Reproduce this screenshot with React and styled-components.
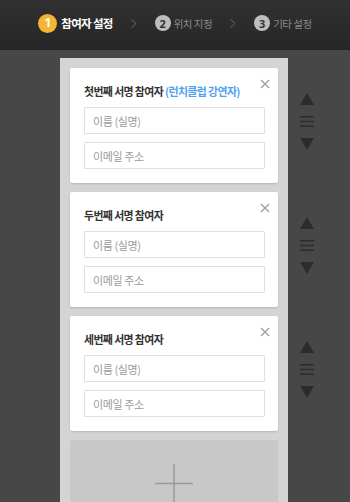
import React from "react";
import styled, { createGlobalStyle } from "styled-components";

const Global = createGlobalStyle`
  html, body { margin: 0; padding: 0; background: #474747; }
  body { font-family: "Noto Sans CJK KR", "Noto Sans", sans-serif; overflow: hidden; }
  * { box-sizing: border-box; }
`;

const Page = styled.div`
  width: 350px;
  height: 502px;
  background: #474747;
  overflow: hidden;
`;

const Header = styled.header`
  height: 50px;
  background: linear-gradient(#313131, #262626);
  display: flex;
  align-items: center;
  justify-content: center;
  padding-bottom: 4px;
  gap: 18px;
`;

const Step = styled.div`
  display: flex;
  align-items: center;
  gap: ${p => (p.$active ? "4px" : "3px")};
`;

const Num = styled.span`
  width: ${p => (p.$active ? "19px" : "16px")};
  height: ${p => (p.$active ? "19px" : "16px")};
  border-radius: 50%;
  background: ${p => (p.$active ? "#f4b533" : "#bdbdbd")};
  color: ${p => (p.$active ? "#fff" : "#333")};
  font-family: "Noto Sans", sans-serif;
  font-weight: 700;
  font-size: ${p => (p.$active ? "12px" : "11px")};
  display: flex;
  align-items: center;
  justify-content: center;
  line-height: 1;
`;

const StepLabel = styled.span`
  color: ${p => (p.$active ? "#fff" : "#8a8a8a")};
  font-weight: ${p => (p.$active ? 700 : 400)};
  font-size: ${p => (p.$active ? "11.5px" : "10.5px")};
  letter-spacing: ${p => (p.$active ? "-0.7px" : "-0.5px")};
  white-space: nowrap;
`;

const Chevron = styled.svg`
  width: 6px;
  height: 9px;
  display: block;
`;

const Body = styled.div`
  display: flex;
  padding: 8px 0 0 60px;
`;

const Panel = styled.div`
  width: 228px;
  background: #d4d4d4;
  padding: 10px;
  display: flex;
  flex-direction: column;
  gap: 9px;
  min-height: 460px;
`;

const Card = styled.div`
  position: relative;
  background: #fff;
  border-radius: 2px;
  box-shadow: 0 1px 2px rgba(0, 0, 0, 0.15);
  padding: 13px 13px 14px 14px;
  display: flex;
  flex-direction: column;
  gap: 8px;
`;

const Title = styled.div`
  height: 20px;
  line-height: 20px;
  margin-bottom: -2px;
  font-size: 10.9px;
  font-weight: 700;
  color: #333;
  letter-spacing: -0.6px;
  white-space: nowrap;
`;

const Accent = styled.span`
  color: #4ea2ef;
`;

const Close = styled.button`
  position: absolute;
  top: 8px;
  right: 5px;
  width: 16px;
  height: 16px;
  padding: 0;
  border: 0;
  background: none;
  display: flex;
  align-items: center;
  justify-content: center;
`;

const Input = styled.input`
  height: 27px;
  width: 100%;
  border: 1px solid #e0e0e0;
  border-radius: 1px;
  padding: 0 8px;
  font-family: "Noto Sans CJK KR", "Noto Sans", sans-serif;
  font-size: 11px;
  letter-spacing: -0.4px;
  outline: none;
  color: #333;
  &::placeholder { color: #9a9a9a; }
`;

const AddBox = styled.div`
  height: 100px;
  background: #c8c8c8;
  border-radius: 3px;
  display: flex;
  justify-content: center;
  padding-top: 24px;
`;

const Controls = styled.div`
  width: 38px;
  padding-top: 10px;
  display: flex;
  flex-direction: column;
  gap: 9px;
`;

const Group = styled.div`
  height: 115px;
  display: flex;
  flex-direction: column;
  align-items: center;
  justify-content: center;
  gap: 11px;
  padding-bottom: 9px;
`;

const Icon = styled.svg`
  display: block;
`;

const Up = () => (
  <Icon width="14" height="12" viewBox="0 0 14 12">
    <path d="M7 0 L14 12 L0 12 Z" fill="#2c2c2c" />
  </Icon>
);
const Down = () => (
  <Icon width="14" height="12" viewBox="0 0 14 12">
    <path d="M0 0 L14 0 L7 12 Z" fill="#2c2c2c" />
  </Icon>
);
const Bars = () => (
  <Icon width="14" height="11" viewBox="0 0 14 11">
    <rect x="0" y="0" width="14" height="1.5" fill="#2c2c2c" />
    <rect x="0" y="4.75" width="14" height="1.5" fill="#2c2c2c" />
    <rect x="0" y="9.5" width="14" height="1.5" fill="#2c2c2c" />
  </Icon>
);

const cards = [
  { title: "첫번째 서명 참여자", accent: "(런치클럽 강연자)" },
  { title: "두번째 서명 참여자" },
  { title: "세번째 서명 참여자" },
];

const steps = [
  { n: 1, label: "참여자 설정", active: true },
  { n: 2, label: "위치 지정" },
  { n: 3, label: "기타 설정" },
];

export default function App() {
  return (
    <Page>
      <Global />
      <Header>
        {steps.map((s, i) => (
          <React.Fragment key={s.n}>
            {i > 0 && (
              <Chevron viewBox="0 0 6 9">
                <path d="M0.5 0.5 L5 4.5 L0.5 8.5" stroke="#6a6a6a" strokeWidth="1" fill="none" />
              </Chevron>
            )}
            <Step $active={s.active}>
              <Num $active={s.active}>{s.n}</Num>
              <StepLabel $active={s.active}>{s.label}</StepLabel>
            </Step>
          </React.Fragment>
        ))}
      </Header>
      <Body>
        <Panel>
          {cards.map((c, i) => (
            <Card key={i}>
              <Close aria-label="close">
                <svg width="10" height="10" viewBox="0 0 10 10">
                  <path d="M1 1 L9 9 M9 1 L1 9" stroke="#a0a0a0" strokeWidth="1.4" />
                </svg>
              </Close>
              <Title>
                {c.title} {c.accent && <Accent>{c.accent}</Accent>}
              </Title>
              <Input placeholder="이름 (실명)" />
              <Input placeholder="이메일 주소" />
            </Card>
          ))}
          <AddBox>
            <svg width="40" height="40" viewBox="0 0 40 40">
              <path d="M20 0 V40 M1 19.5 H39" stroke="#9a9a9a" strokeWidth="1.5" />
            </svg>
          </AddBox>
        </Panel>
        <Controls>
          {cards.map((c, i) => (
            <Group key={i}>
              <Up />
              <Bars />
              <Down />
            </Group>
          ))}
        </Controls>
      </Body>
    </Page>
  );
}
